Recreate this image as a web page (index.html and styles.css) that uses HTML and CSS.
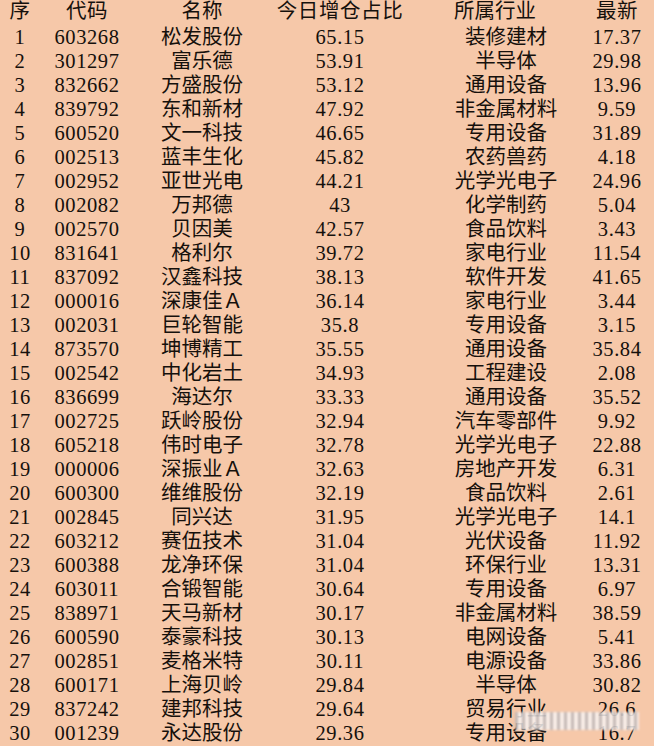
FILE: index.html
```html
<!DOCTYPE html>
<html lang="zh-CN">
<head>
<meta charset="utf-8">
<title>今日增仓占比</title>
<link rel="stylesheet" href="styles.css">
</head>
<body>
<div class="page">
  <div class="grid">
    <div class="c h">序</div><div class="c h">代码</div><div class="c h">名称</div><div class="c h">今日增仓占比</div><div class="c h ind">所属行业</div><div class="c h">最新</div>
    <div class="c">1</div><div class="c">603268</div><div class="c">松发股份</div><div class="c">65.15</div><div class="c i">装修建材</div><div class="c">17.37</div>
    <div class="c">2</div><div class="c">301297</div><div class="c">富乐德</div><div class="c">53.91</div><div class="c i">半导体</div><div class="c">29.98</div>
    <div class="c">3</div><div class="c">832662</div><div class="c">方盛股份</div><div class="c">53.12</div><div class="c i">通用设备</div><div class="c">13.96</div>
    <div class="c">4</div><div class="c">839792</div><div class="c">东和新材</div><div class="c">47.92</div><div class="c i">非金属材料</div><div class="c">9.59</div>
    <div class="c">5</div><div class="c">600520</div><div class="c">文一科技</div><div class="c">46.65</div><div class="c i">专用设备</div><div class="c">31.89</div>
    <div class="c">6</div><div class="c">002513</div><div class="c">蓝丰生化</div><div class="c">45.82</div><div class="c i">农药兽药</div><div class="c">4.18</div>
    <div class="c">7</div><div class="c">002952</div><div class="c">亚世光电</div><div class="c">44.21</div><div class="c i">光学光电子</div><div class="c">24.96</div>
    <div class="c">8</div><div class="c">002082</div><div class="c">万邦德</div><div class="c">43</div><div class="c i">化学制药</div><div class="c">5.04</div>
    <div class="c">9</div><div class="c">002570</div><div class="c">贝因美</div><div class="c">42.57</div><div class="c i">食品饮料</div><div class="c">3.43</div>
    <div class="c">10</div><div class="c">831641</div><div class="c">格利尔</div><div class="c">39.72</div><div class="c i">家电行业</div><div class="c">11.54</div>
    <div class="c">11</div><div class="c">837092</div><div class="c">汉鑫科技</div><div class="c">38.13</div><div class="c i">软件开发</div><div class="c">41.65</div>
    <div class="c">12</div><div class="c">000016</div><div class="c">深康佳Ａ</div><div class="c">36.14</div><div class="c i">家电行业</div><div class="c">3.44</div>
    <div class="c">13</div><div class="c">002031</div><div class="c">巨轮智能</div><div class="c">35.8</div><div class="c i">专用设备</div><div class="c">3.15</div>
    <div class="c">14</div><div class="c">873570</div><div class="c">坤博精工</div><div class="c">35.55</div><div class="c i">通用设备</div><div class="c">35.84</div>
    <div class="c">15</div><div class="c">002542</div><div class="c">中化岩土</div><div class="c">34.93</div><div class="c i">工程建设</div><div class="c">2.08</div>
    <div class="c">16</div><div class="c">836699</div><div class="c">海达尔</div><div class="c">33.33</div><div class="c i">通用设备</div><div class="c">35.52</div>
    <div class="c">17</div><div class="c">002725</div><div class="c">跃岭股份</div><div class="c">32.94</div><div class="c i">汽车零部件</div><div class="c">9.92</div>
    <div class="c">18</div><div class="c">605218</div><div class="c">伟时电子</div><div class="c">32.78</div><div class="c i">光学光电子</div><div class="c">22.88</div>
    <div class="c">19</div><div class="c">000006</div><div class="c">深振业Ａ</div><div class="c">32.63</div><div class="c i">房地产开发</div><div class="c">6.31</div>
    <div class="c">20</div><div class="c">600300</div><div class="c">维维股份</div><div class="c">32.19</div><div class="c i">食品饮料</div><div class="c">2.61</div>
    <div class="c">21</div><div class="c">002845</div><div class="c">同兴达</div><div class="c">31.95</div><div class="c i">光学光电子</div><div class="c">14.1</div>
    <div class="c">22</div><div class="c">603212</div><div class="c">赛伍技术</div><div class="c">31.04</div><div class="c i">光伏设备</div><div class="c">11.92</div>
    <div class="c">23</div><div class="c">600388</div><div class="c">龙净环保</div><div class="c">31.04</div><div class="c i">环保行业</div><div class="c">13.31</div>
    <div class="c">24</div><div class="c">603011</div><div class="c">合锻智能</div><div class="c">30.64</div><div class="c i">专用设备</div><div class="c">6.97</div>
    <div class="c">25</div><div class="c">838971</div><div class="c">天马新材</div><div class="c">30.17</div><div class="c i">非金属材料</div><div class="c">38.59</div>
    <div class="c">26</div><div class="c">600590</div><div class="c">泰豪科技</div><div class="c">30.13</div><div class="c i">电网设备</div><div class="c">5.41</div>
    <div class="c">27</div><div class="c">002851</div><div class="c">麦格米特</div><div class="c">30.11</div><div class="c i">电源设备</div><div class="c">33.86</div>
    <div class="c">28</div><div class="c">600171</div><div class="c">上海贝岭</div><div class="c">29.84</div><div class="c i">半导体</div><div class="c">30.82</div>
    <div class="c">29</div><div class="c">837242</div><div class="c">建邦科技</div><div class="c">29.64</div><div class="c i">贸易行业</div><div class="c">26.6</div>
    <div class="c">30</div><div class="c">001239</div><div class="c">永达股份</div><div class="c">29.36</div><div class="c i">专用设备</div><div class="c">16.7</div>
  </div>
  <div class="watermark"></div>
</div>
</body>
</html>
```
FILE: styles.css
```css
html, body {
  margin: 0;
  padding: 0;
  background: #f6c8a9;
}
.page {
  position: relative;
  width: 654px;
  height: 746px;
  overflow: hidden;
  background: #f6c8a9;
  color: #15100c;
  font-family: "Liberation Serif", "Noto Sans CJK SC", serif;
  font-size: 20.5px;
}
.grid {
  display: grid;
  grid-template-columns: 40px 94px 136px 140px 170px 74px;
  grid-auto-rows: 24px;
}
.c {
  text-align: center;
  white-space: nowrap;
  line-height: 21px;
  padding-top: 3px;
}
.c:nth-child(6n+1),
.c:nth-child(6n+2),
.c:nth-child(6n+4),
.c:nth-child(6n) {
  letter-spacing: 0.6px;
}
.h {
  padding-top: 1px;
  line-height: 21px;
}
.i {
  padding-left: 22px;
}
.watermark {
  position: absolute;
  left: 515px;
  top: 712px;
  width: 124px;
  height: 18px;
  background:
    repeating-linear-gradient(90deg, rgba(150, 140, 140, 0.55) 0 3px, rgba(255, 250, 248, 0) 3px 7px),
    rgba(250, 244, 242, 0.85);
  filter: blur(1.2px);
}
```
